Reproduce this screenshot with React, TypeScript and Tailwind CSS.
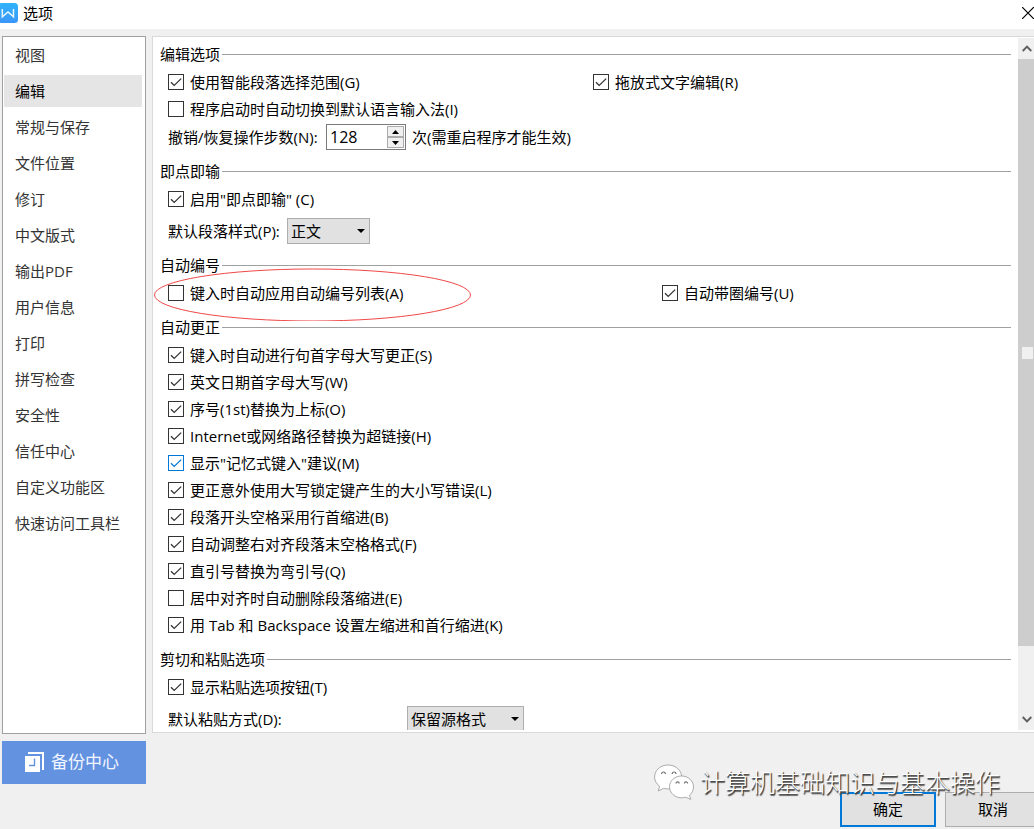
import React, { useState } from "react";

type Option = {
  label: string;
  checked?: boolean;
  active?: boolean;
};

const categories = [
  "视图",
  "编辑",
  "常规与保存",
  "文件位置",
  "修订",
  "中文版式",
  "输出PDF",
  "用户信息",
  "打印",
  "拼写检查",
  "安全性",
  "信任中心",
  "自定义功能区",
  "快速访问工具栏",
];

const corrections: Option[] = [
  { label: "键入时自动进行句首字母大写更正(S)", checked: true },
  { label: "英文日期首字母大写(W)", checked: true },
  { label: "序号(1st)替换为上标(O)", checked: true },
  { label: "Internet或网络路径替换为超链接(H)", checked: true },
  { label: '显示"记忆式键入"建议(M)', checked: true, active: true },
  { label: "更正意外使用大写锁定键产生的大小写错误(L)", checked: true },
  { label: "段落开头空格采用行首缩进(B)", checked: true },
  { label: "自动调整右对齐段落末空格格式(F)", checked: true },
  { label: "直引号替换为弯引号(Q)", checked: true },
  { label: "居中对齐时自动删除段落缩进(E)" },
  { label: "用 Tab 和 Backspace 设置左缩进和首行缩进(K)", checked: true },
];

function CheckOption({ label, checked = false, active = false }: Option) {
  return (
    <label className="flex h-[27px] w-fit items-center gap-1.5 whitespace-nowrap">
      <span className="grid size-4 shrink-0">
        <input
          type="checkbox"
          defaultChecked={checked}
          className={`peer col-start-1 row-start-1 size-4 appearance-none border bg-white ${
            active ? "border-[#0078d7]" : "border-[#333333]"
          }`}
        />
        <svg
          aria-hidden
          viewBox="0 0 16 16"
          className={`pointer-events-none invisible col-start-1 row-start-1 size-4 fill-none peer-checked:visible ${
            active ? "stroke-[#0078d7]" : "stroke-[#333333]"
          }`}
          strokeWidth="1.3"
        >
          <path d="M3 8.2l3.2 3.2L13.2 4.6" />
        </svg>
      </span>
      {label}
    </label>
  );
}

function Group({ title, children }: { title: string; children: React.ReactNode }) {
  return (
    <section className="relative">
      <div className="flex h-7 items-center gap-0.5">
        <h2 className="whitespace-nowrap">{title}</h2>
        <div className="h-px flex-1 bg-[#a0a0a0]" />
      </div>
      <div className="pl-2">{children}</div>
    </section>
  );
}

function Dropdown({ id, options, className }: { id: string; options: string[]; className: string }) {
  return (
    <div className={`grid h-[26px] ${className}`}>
      <select
        id={id}
        className="col-start-1 row-start-1 appearance-none border border-[#adadad] bg-[#e1e1e1] pl-[3px] pr-5"
      >
        {options.map((o) => (
          <option key={o}>{o}</option>
        ))}
      </select>
      <svg
        aria-hidden
        viewBox="0 0 8 4"
        className="pointer-events-none col-start-1 row-start-1 mr-[5px] h-1 w-2 self-center justify-self-end"
      >
        <path d="M0 0h8L4 4z" />
      </svg>
    </div>
  );
}

function StepBox() {
  const [steps, setSteps] = useState(128);
  const button = "grid h-[11px] w-[17px] place-items-center border border-[#acacac] bg-[#f0f0f0]";
  return (
    <div className="flex h-[26px] w-20 items-center border border-[#7a7a7a] bg-white pr-px">
      <input
        id="undo-steps"
        inputMode="numeric"
        value={steps}
        onChange={(e) => setSteps(Number(e.target.value) || 0)}
        className="w-0 flex-1 pl-[3px] text-base leading-6 outline-none"
      />
      <div className="flex flex-col">
        <button aria-label="增加" className={button} onClick={() => setSteps(steps + 1)}>
          <svg viewBox="0 0 7 4" className="h-1 w-[7px]">
            <path d="M0 4h7L3.5 0z" />
          </svg>
        </button>
        <button aria-label="减少" className={button} onClick={() => setSteps(steps - 1)}>
          <svg viewBox="0 0 7 4" className="h-1 w-[7px]">
            <path d="M0 0h7L3.5 4z" />
          </svg>
        </button>
      </div>
    </div>
  );
}

function ScrollBar() {
  return (
    <div aria-hidden className="flex w-4 shrink-0 flex-col bg-[#f0f0f0]">
      <div className="grid h-[21px] place-items-center">
        <svg viewBox="0 0 10 7" className="ml-0.5 h-[7px] w-2.5 fill-none stroke-[#606060]" strokeWidth="2">
          <path d="M0.7 6L5 1.6 9.3 6" />
        </svg>
      </div>
      <div className="grid flex-1 place-items-center bg-[#cdcdcd]">
        <div className="ml-[3px] h-3 w-[11px] bg-[#f0f0f0]" />
      </div>
      <div className="flex h-21 items-end justify-center pb-[7px]">
        <svg viewBox="0 0 10 7" className="ml-0.5 h-[7px] w-2.5 fill-none stroke-[#606060]" strokeWidth="2">
          <path d="M0.7 1L5 5.4 9.3 1" />
        </svg>
      </div>
    </div>
  );
}

function Watermark() {
  return (
    <div className="pointer-events-none absolute top-[31px] right-[34px] flex items-center gap-1.5 whitespace-nowrap">
      <svg viewBox="0 0 40 36" className="h-9 w-10 fill-white stroke-[#8a8a8a]" strokeWidth="0.7">
        <path d="M14 1C6.6 1 .6 6.200 .6 13c0 3.800 1.900 7 5 9.200L4.300 27l5.400-2.700c1.400.4 2.900.6 4.500.6 7.400 0 13.400-5.200 13.400-12S21.400 1 14 1z" />
        <path d="M27.500 12c-6.700 0-12 4.800-12 10.800s5.300 11 12 11c1.500 0 2.900-.2 4.200-.6l5 2.200-1.200-4.200c2.500-2 4-5 4-8.400 0-6-5.300-10.800-12-10.800z" />
        <g fill="none" stroke="#707070" strokeWidth="1.2">
          <path d="M7.600 10a1.900 2 0 0 1 3.800 0M18.200 10a1.900 2 0 0 1 3.800 0" />
          <path d="M22 19.500a1.600 1.700 0 0 1 3.200 0M30.400 19.500a1.600 1.700 0 0 1 3.200 0" />
        </g>
      </svg>
      <span className="text-[25px] leading-9 font-light text-white [text-shadow:1px_1px_1px_#333,1px_2px_1px_#666]">
        计算机基础知识与基本操作
      </span>
    </div>
  );
}

export default function App() {
  const [current, setCurrent] = useState("编辑");

  return (
    <div className="flex h-screen flex-col overflow-hidden bg-[#f0f0f0] font-['Open_Sans','Noto_Sans_CJK_SC',sans-serif] text-[15px] leading-5 text-black">
      {/* Title bar */}
      <header className="flex h-[29px] shrink-0 items-center gap-[5px] bg-white">
        <svg aria-hidden viewBox="0 0 18 20" className="mb-[3px] h-5 w-[18px]">
          <defs>
            <linearGradient id="logo" x1="0" y1="0" x2="0" y2="1">
              <stop offset="0" stopColor="#2fb4fb" />
              <stop offset="1" stopColor="#3b96fb" />
            </linearGradient>
          </defs>
          <rect x="-2" width="20" height="20" rx="3.500" fill="url(#logo)" />
          <path d="M2.300 6v7.800L8 9l5.500 4.800V6" fill="none" stroke="#e8f6ff" strokeWidth="1.500" />
        </svg>
        <h1 className="pb-1">选项</h1>
        <button aria-label="关闭" className="ml-auto pb-[3px]">
          <svg viewBox="0 0 12 12" className="size-3 stroke-black" strokeWidth="1.200">
            <path d="M0 0l12 12M12 0L0 12" />
          </svg>
        </button>
      </header>

      <div className="flex min-h-0 flex-1 gap-1.5 pt-[7px] pl-0.5">
        {/* Categories */}
        <div className="flex w-36 shrink-0 flex-col gap-[7px] pb-[45px]">
          <nav className="flex flex-1 flex-col gap-1 border border-[#a0a0a0] bg-white py-0.5 pr-[3px] pl-px">
            {categories.map((c) => (
              <button
                key={c}
                onClick={() => setCurrent(c)}
                className={`h-8 pl-[11px] text-left ${c === current ? "bg-[#e5e5e5] text-black" : "text-[#333333]"}`}
              >
                {c}
              </button>
            ))}
          </nav>
          <button className="flex h-[43px] items-center justify-center gap-[7px] bg-[#6392e1] pr-1 pb-0.5 text-[17px] text-[#f2f7ff]">
            <svg aria-hidden viewBox="0 0 19 20" className="h-5 w-[19px]">
              <path d="M3 0h16v18h-2V2H3z" fill="white" />
              <path d="M0 4h15v16H0z" fill="white" />
              <path d="M9.500 6.500v7H4" fill="none" stroke="#6392e1" strokeWidth="1.400" />
            </svg>
            备份中心
          </button>
        </div>

        <div className="flex min-w-0 flex-1 flex-col">
          {/* Settings of the chosen category */}
          <main className="flex min-h-0 flex-1 border-y border-l border-[#d9d9d9] bg-white pt-px pb-0.5">
            <div className="flex min-w-0 flex-1 flex-col gap-[7px] overflow-hidden px-[7px] pt-0.5">
              <Group title="编辑选项">
                <div className="flex">
                  <div className="w-[425px]">
                    <CheckOption label="使用智能段落选择范围(G)" checked />
                  </div>
                  <CheckOption label="拖放式文字编辑(R)" checked />
                </div>
                <CheckOption label="程序启动时自动切换到默认语言输入法(I)" />
                <div className="flex h-7 items-center pt-0.5 whitespace-nowrap">
                  <label htmlFor="undo-steps" className="w-[158px]">
                    撤销/恢复操作步数(N):
                  </label>
                  <StepBox />
                  <span className="pl-1.5">次(需重启程序才能生效)</span>
                </div>
              </Group>

              <Group title="即点即输">
                <CheckOption label={'启用"即点即输" (C)'} checked />
                <div className="flex items-center pt-1.5">
                  <label htmlFor="paragraph-style" className="w-[119px]">
                    默认段落样式(P):
                  </label>
                  <Dropdown id="paragraph-style" options={["正文", "标题 1", "标题 2"]} className="w-[83px]" />
                </div>
              </Group>

              <Group title="自动编号">
                <div className="flex">
                  <div className="w-[494px]">
                    <CheckOption label="键入时自动应用自动编号列表(A)" />
                  </div>
                  <CheckOption label="自动带圈编号(U)" checked />
                </div>
                <svg
                  aria-hidden
                  viewBox="0 0 318 54"
                  className="pointer-events-none absolute top-4 -left-1.5 h-[54px] w-[318px] fill-none stroke-[#f04848]"
                >
                  <ellipse cx="158.5" cy="28" rx="158" ry="26" />
                </svg>
              </Group>

              <Group title="自动更正">
                {corrections.map((o) => (
                  <CheckOption key={o.label} {...o} />
                ))}
              </Group>

              <Group title="剪切和粘贴选项">
                <CheckOption label="显示粘贴选项按钮(T)" checked />
                <div className="flex items-center pt-1.5">
                  <label htmlFor="paste-mode" className="w-[239px]">
                    默认粘贴方式(D):
                  </label>
                  <Dropdown id="paste-mode" options={["保留源格式", "匹配当前格式", "只粘贴文本"]} className="w-[117px]" />
                </div>
              </Group>
            </div>
            <ScrollBar />
          </main>

          <footer className="relative flex h-24 shrink-0 items-end justify-end gap-[9px] pb-0.5">
            <button className="h-[35px] w-24 border-2 border-[#0078d7] bg-[#e1e1e1] pb-0.5">确定</button>
            <button className="-mr-[7px] h-[35px] w-24 border border-[#adadad] bg-[#e1e1e1] pb-0.5">取消</button>
            <Watermark />
          </footer>
        </div>
      </div>
    </div>
  );
}
